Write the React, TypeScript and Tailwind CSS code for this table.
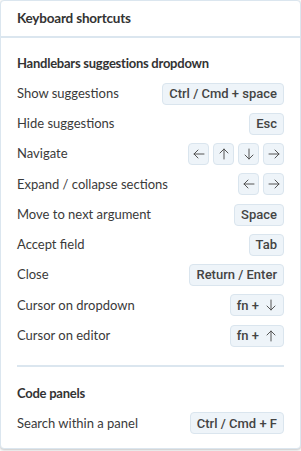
import React from "react";

const label = { fontFamily: "Lato, 'Noto Sans', sans-serif" };
const keyFont = { fontFamily: "Roboto, 'Noto Sans', sans-serif" };

function Key({ children, square }: { children: React.ReactNode; square?: boolean }) {
  return (
    <span
      style={keyFont}
      className={
        "flex h-[22px] items-center justify-center rounded-[4px] border border-[#dae5ee] bg-[#eef4f9] text-[13px] font-medium text-[#444] " +
        (square ? "w-[21px]" : "px-[6px]")
      }
    >
      {children}
    </span>
  );
}

function Arrow({ dir }: { dir: "left" | "up" | "down" | "right" }) {
  const rot = { left: 180, up: -90, down: 90, right: 0 }[dir];
  return (
    <svg width="12" height="12" viewBox="0 0 12 12" style={{ transform: `rotate(${rot}deg)` }}>
      <path d="M1 6h10M7 2l4 4-4 4" fill="none" stroke="#555" strokeWidth="1" strokeLinecap="round" strokeLinejoin="round" />
    </svg>
  );
}

function Row({ name, children }: { name: string; children: React.ReactNode }) {
  return (
    <div className="flex h-[30.25px] items-center justify-between">
      <span style={label} className="text-[13px] text-[#3a3a3a]">
        {name}
      </span>
      <div className="flex items-center gap-[4px]">{children}</div>
    </div>
  );
}

export default function App() {
  return (
    <div className="h-[451px] w-[301px] bg-white">
      <div className="h-[449px] w-[301px] overflow-hidden rounded-[4px] border border-[#dbe6ef] bg-white shadow-[0_1px_3px_rgba(0,0,0,0.25)]">
        <div className="flex h-[37px] items-center border-b-2 border-[#dbe6ef] px-[16px]">
          <span style={label} className="text-[13.5px] font-bold tracking-[-0.2px] text-[#333]">
            Keyboard shortcuts
          </span>
        </div>
        <div className="px-[16px] pt-[16px]">
          <h3 style={label} className="mb-[5px] text-[13px] font-bold tracking-[-0.25px] text-[#333]">
            Handlebars suggestions dropdown
          </h3>
          <Row name="Show suggestions">
            <Key>Ctrl / Cmd + space</Key>
          </Row>
          <Row name="Hide suggestions">
            <Key>Esc</Key>
          </Row>
          <Row name="Navigate">
            <Key square><Arrow dir="left" /></Key>
            <Key square><Arrow dir="up" /></Key>
            <Key square><Arrow dir="down" /></Key>
            <Key square><Arrow dir="right" /></Key>
          </Row>
          <Row name="Expand / collapse sections">
            <Key square><Arrow dir="left" /></Key>
            <Key square><Arrow dir="right" /></Key>
          </Row>
          <Row name="Move to next argument">
            <Key>Space</Key>
          </Row>
          <Row name="Accept field">
            <Key>Tab</Key>
          </Row>
          <Row name="Close">
            <Key>Return / Enter</Key>
          </Row>
          <Row name="Cursor on dropdown">
            <Key>
              fn +<span className="ml-[6px] flex"><Arrow dir="down" /></span>
            </Key>
          </Row>
          <Row name="Cursor on editor">
            <Key>
              fn +<span className="ml-[6px] flex"><Arrow dir="up" /></span>
            </Key>
          </Row>
          <div className="mt-[14px] border-t-2 border-[#dbe6ef]" />
          <h3 style={label} className="mb-[5px] mt-[17px] text-[13px] font-bold tracking-[-0.25px] text-[#333]">
            Code panels
          </h3>
          <Row name="Search within a panel">
            <Key>Ctrl / Cmd + F</Key>
          </Row>
        </div>
      </div>
    </div>
  );
}
